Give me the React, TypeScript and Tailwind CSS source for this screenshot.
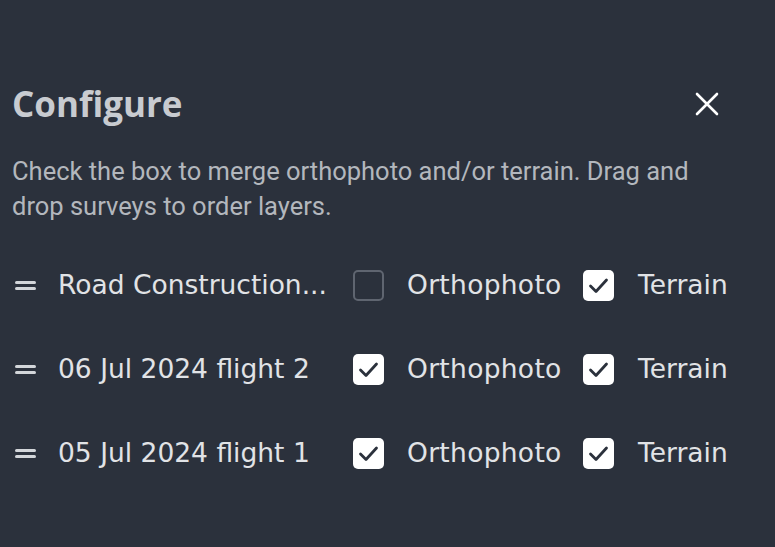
import React from "react";

function Box({ checked }: { checked: boolean }) {
  if (!checked)
    return <div className="w-[31px] h-[31px] rounded-[5px] border-2 border-[#5f6570] shrink-0" />;
  return (
    <div className="w-[31px] h-[31px] rounded-[5px] bg-white shrink-0 flex items-center justify-center">
      <svg width="31" height="31" viewBox="0 0 31 31" fill="none">
        <path d="M7.5 16 L13 21.5 L23.5 10" stroke="#2b313c" strokeWidth="2.8" strokeLinecap="round" strokeLinejoin="round" />
      </svg>
    </div>
  );
}

function Row({ name, ortho, terrain }: { name: string; ortho: boolean; terrain: boolean }) {
  return (
    <div className="flex items-center h-[84px]">
      <div className="w-[46px] pl-[3px] flex flex-col gap-[3px] shrink-0">
        <div className="w-[21px] h-[3px] bg-[#d3d6da] rounded-sm" />
        <div className="w-[21px] h-[3px] bg-[#d3d6da] rounded-sm" />
      </div>
      <div className="w-[295px] shrink-0 whitespace-nowrap text-[#e1e3e6]">{name}</div>
      <Box checked={ortho} />
      <div className="ml-[23px] w-[176px] shrink-0 text-[#e1e3e6] tracking-[0.3px]">Orthophoto</div>
      <Box checked={terrain} />
      <div className="ml-[24px] text-[#e1e3e6]">Terrain</div>
    </div>
  );
}

export default function App() {
  return (
    <div className="w-[775px] h-[547px] bg-[#2b313c] overflow-hidden pl-[12px] pt-[78px]" style={{ fontFamily: "'Open Sans', 'Noto Sans', sans-serif" }}>
      <div className="flex items-center justify-between pr-[56px] h-[52px]">
        <h1 className="text-[35px] font-bold text-[#c8cbd0]">Configure</h1>
        <svg width="24" height="24" viewBox="0 0 24 24" fill="none">
          <path d="M2 2 L22 22 M22 2 L2 22" stroke="#ffffff" strokeWidth="2.6" strokeLinecap="round" />
        </svg>
      </div>
      <p className="mt-[24px] text-[25.5px] leading-[35px] text-[#b3b7bd] w-[720px]" style={{ fontFamily: "Roboto, sans-serif" }}>
        Check the box to merge orthophoto and/or terrain. Drag and drop surveys to order layers.
      </p>
      <div className="mt-[19px] text-[26.5px]" style={{ fontFamily: "'DejaVu Sans', sans-serif" }}>
        <Row name="Road Construction..." ortho={false} terrain={true} />
        <Row name="06 Jul 2024 flight 2" ortho={true} terrain={true} />
        <Row name="05 Jul 2024 flight 1" ortho={true} terrain={true} />
      </div>
    </div>
  );
}
